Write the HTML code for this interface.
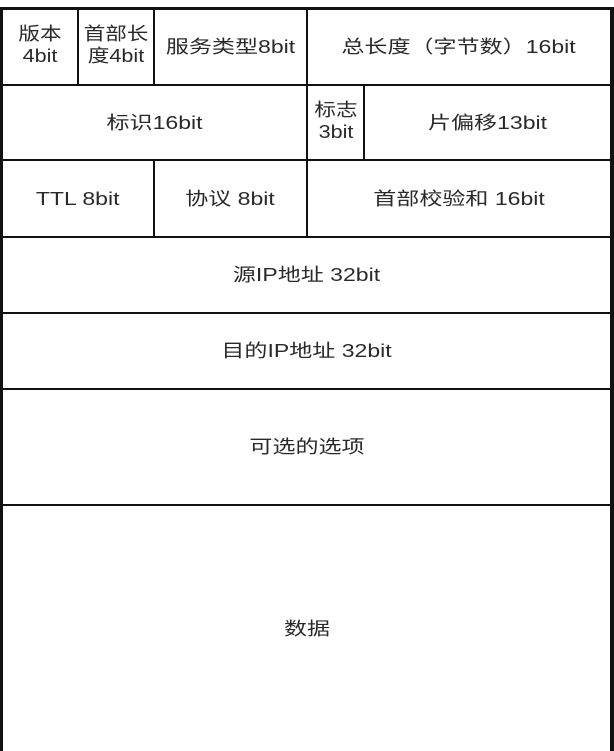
<!DOCTYPE html>
<html><head><meta charset="utf-8"><style>
html,body{margin:0;padding:0;width:614px;height:751px;background:#fff;overflow:hidden}
body{position:relative;font-family:"Liberation Sans","Noto Sans CJK SC",sans-serif;font-size:18px;color:#2a2a2a}
.l{position:absolute;background:#111}
.t{position:absolute;display:flex;align-items:center;justify-content:center;text-align:center;line-height:20px}
.t span{display:inline-block;transform:scaleX(1.28);white-space:nowrap}
.t span.n{transform:scaleX(1.2);line-height:22px}
</style></head><body>
<div class="l" style="left:0;top:7px;width:3px;height:744px"></div>
<div class="l" style="left:610px;top:7px;width:4px;height:744px"></div>
<div class="l" style="left:0;top:7px;width:614px;height:3px"></div>
<div class="l" style="left:0;top:84px;width:614px;height:2px"></div>
<div class="l" style="left:0;top:159px;width:614px;height:2px"></div>
<div class="l" style="left:0;top:236px;width:614px;height:2px"></div>
<div class="l" style="left:0;top:312px;width:614px;height:2px"></div>
<div class="l" style="left:0;top:388px;width:614px;height:2px"></div>
<div class="l" style="left:0;top:504px;width:614px;height:2px"></div>
<div class="l" style="left:77px;top:8px;width:2px;height:77px"></div>
<div class="l" style="left:153px;top:8px;width:2px;height:77px"></div>
<div class="l" style="left:306px;top:8px;width:2px;height:229px"></div>
<div class="l" style="left:363px;top:85px;width:2px;height:75px"></div>
<div class="l" style="left:153px;top:160px;width:2px;height:77px"></div>

<div class="t" style="left:3px;top:8px;width:74px;height:74px"><span class="n">版本<br>4bit</span></div>
<div class="t" style="left:79px;top:8px;width:74px;height:74px"><span class="n">首部长<br>度4bit</span></div>
<div class="t" style="left:155px;top:10px;width:151px;height:74px"><span>服务类型8bit</span></div>
<div class="t" style="left:308px;top:10px;width:302px;height:74px"><span>总长度（字节数）16bit</span></div>
<div class="t" style="left:3px;top:86px;width:303px;height:73px"><span>标识16bit</span></div>
<div class="t" style="left:308px;top:84px;width:55px;height:73px"><span class="n">标志<br>3bit</span></div>
<div class="t" style="left:365px;top:86px;width:245px;height:73px"><span>片偏移13bit</span></div>
<div class="t" style="left:3px;top:161px;width:150px;height:75px"><span>TTL 8bit</span></div>
<div class="t" style="left:155px;top:161px;width:151px;height:75px"><span>协议 8bit</span></div>
<div class="t" style="left:308px;top:161px;width:302px;height:75px"><span>首部校验和 16bit</span></div>
<div class="t" style="left:3px;top:238px;width:607px;height:74px"><span>源IP地址 32bit</span></div>
<div class="t" style="left:3px;top:314px;width:607px;height:74px"><span>目的IP地址 32bit</span></div>
<div class="t" style="left:3px;top:390px;width:607px;height:114px"><span>可选的选项</span></div>
<div class="t" style="left:3px;top:506px;width:607px;height:245px"><span>数据</span></div>
</body></html>
